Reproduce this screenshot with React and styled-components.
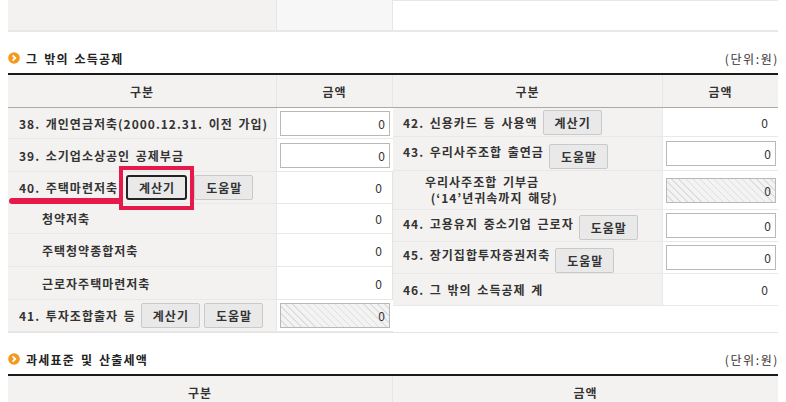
import React from "react";
import styled, { createGlobalStyle } from "styled-components";

const GlobalStyle = createGlobalStyle`
  body {
    margin: 0;
    background: #fff;
    font-family: "Noto Sans CJK KR", "Noto Sans", sans-serif;
    font-size: 12px;
    color: #333;
    word-spacing: 2px;
    letter-spacing: 1px;
  }
`;

const RED = "#e6194b";

const Page = styled.div`
  padding: 0 8px;
  width: 770px;
`;

const TopStrip = styled.div`
  display: grid;
  grid-template-columns: 269px 116px 1fr;
  height: 32px;
  border-bottom: 2px solid #e8e8e8;
  box-sizing: border-box;
`;

const TopCell = styled.div`
  background: ${(p) => p.$bg};
  border-right: 1px solid #e6e6e6;
  border-top: ${(p) => (p.$boxed ? "1px solid #e8e8e8" : "none")};
  &:last-child {
    border-right: none;
  }
`;

const SectionHead = styled.div`
  display: flex;
  justify-content: space-between;
  align-items: center;
  height: 16px;
  padding: 18px 0 7px;
`;

const Title = styled.h3`
  display: flex;
  align-items: center;
  gap: 6px;
  margin: 0;
  font-size: 12px;
  font-weight: 700;
  color: #222;
  letter-spacing: 1.2px;
`;

const Unit = styled.span`
  font-size: 12px;
  color: #333;
  letter-spacing: 1.6px;
  margin-right: -1px;
`;

const Table = styled.div`
  border-top: 2px solid #1a1a1a;
`;

const HeadRow = styled.div`
  display: grid;
  grid-template-columns: ${(p) => p.$cols};
  height: 33px;
  background: #f3f2f0;
  border-bottom: 1px solid #aaa;
  box-sizing: border-box;
`;

const HeadCell = styled.div`
  display: flex;
  align-items: center;
  justify-content: center;
  font-weight: 700;
  color: #333;
  border-right: 1px solid #e6e6e6;
  &:last-child {
    border-right: none;
  }
`;

const Body = styled.div`
  display: grid;
  grid-template-columns: 385px 385px;
  border-bottom: 1px solid #e4e4e4;
`;

const Half = styled.div`
  display: flex;
  flex-direction: column;
  border-right: ${(p) => (p.$first ? "1px solid #e4e4e4" : "none")};
`;

const Row = styled.div`
  display: grid;
  grid-template-columns: ${(p) => p.$label}px 1fr;
  height: ${(p) => p.$h}px;
  border-bottom: 1px solid #e8e8e8;
  box-sizing: border-box;
`;

const Filler = styled.div`
  flex: 1;
  background: #fff;
`;

const Label = styled.div`
  display: flex;
  align-items: center;
  padding-left: ${(p) => p.$indent}px;
  background: #f3f2f0;
  border-right: 1px solid #e8e8e8;
  font-weight: 700;
  color: #333;
  white-space: nowrap;
`;

const LabelText = styled.span`
  position: relative;
  top: ${(p) => p.$up || 0}px;
`;

const TwoLine = styled.div`
  display: flex;
  flex-direction: column;
  line-height: 16px;
`;

const Amount = styled.div`
  display: flex;
  align-items: center;
  justify-content: flex-end;
  padding: 0 3px;
  background: #fff;
`;

const Value = styled.span`
  padding-right: 7px;
  color: #333;
  letter-spacing: 0;
`;

const NumInput = styled.input`
  width: 110px;
  height: 25px;
  box-sizing: border-box;
  border: 1px solid #b8b8b8;
  padding: 0 4px;
  text-align: right;
  font-family: inherit;
  font-size: 12px;
  color: #333;
  background: ${(p) =>
    p.disabled
      ? "repeating-linear-gradient(45deg, #f3f3f3 0 4px, #dedede 4px 5px)"
      : "#fff"};
`;

const Btn = styled.button`
  height: 25px;
  margin-left: ${(p) => (p.$gap != null ? p.$gap : 5)}px;
  padding: 0 10px 0 11px;
  border: ${(p) => (p.$focus ? "2px solid #222" : "1px solid #c9c9c9")};
  border-radius: ${(p) => (p.$focus ? 3 : 2)}px;
  background: #e9e9e9;
  font-family: inherit;
  font-size: 12px;
  font-weight: 700;
  color: #333;
  letter-spacing: 1px;
  position: relative;
  top: ${(p) => p.$down || 0}px;
`;

const Focus = styled.span`
  position: relative;
  display: inline-flex;
  margin-left: 8px;
  margin-right: 2px;
`;

const RedBox = styled.span`
  position: absolute;
  top: -9px;
  left: -7px;
  right: -7px;
  bottom: -10px;
  border: 4px solid ${RED};
  pointer-events: none;
`;

const RedLine = styled.span`
  position: absolute;
  right: calc(100% + 4px);
  top: 23px;
  width: 113px;
  height: 6px;
  background: ${RED};
  border-radius: 3px 0 0 3px;
  pointer-events: none;
`;

const Bullet = () => (
  <svg width="12" height="12" viewBox="0 0 12 12">
    <circle cx="6" cy="6" r="5.8" fill="#f39a1e" />
    <polyline
      points="4.6,3.4 7.2,6 4.6,8.6"
      fill="none"
      stroke="#fff"
      strokeWidth="1.8"
    />
  </svg>
);

const leftRows = [
  { h: 31, label: "38. 개인연금저축(2000.12.31. 이전 가입)", input: true },
  { h: 33, label: "39. 소기업소상공인 공제부금", input: true },
  { h: 32, label: "40. 주택마련저축", focus: true },
  { h: 30, label: "청약저축", indent: 34 },
  { h: 33, label: "주택청약종합저축", indent: 34 },
  { h: 33, label: "근로자주택마련저축", indent: 34 },
  { h: 32, label: "41. 투자조합출자 등", calc: true, help: true, disabled: true },
];

const rightRows = [
  { h: 29, label: "42. 신용카드 등 사용액", calc: true },
  { h: 34, label: "43. 우리사주조합 출연금", help: true, input: true, up: -2, down: 3 },
  { h: 39, two: ["우리사주조합 기부금", "\u00a0(‘14’년귀속까지 해당)"], disabled: true },
  { h: 32, label: "44. 고용유지 중소기업 근로자", help: true, input: true, up: -2, down: 2 },
  { h: 32, label: "45. 장기집합투자증권저축", help: true, input: true, up: -3, down: 3, gap: 5 },
  { h: 32, label: "46. 그 밖의 소득공제 계" },
];

const renderRow = (r, i, labelW, pad) => (
  <Row key={i} $h={r.h} $label={labelW}>
    <Label $indent={r.indent || (r.two ? 32 : pad)}>
      {r.two ? (
        <TwoLine>
          <span>{r.two[0]}</span>
          <span>{r.two[1]}</span>
        </TwoLine>
      ) : (
        <LabelText $up={r.up}>{r.label}</LabelText>
      )}
      {r.focus && (
        <>
          <Focus>
            <RedLine />
            <Btn $focus $gap={0}>계산기</Btn>
            <RedBox />
          </Focus>
          <Btn $gap={5}>도움말</Btn>
        </>
      )}
      {r.calc && <Btn>계산기</Btn>}
      {r.help && (
        <Btn $gap={r.calc ? 4 : r.gap || 5} $down={r.down}>
          도움말
        </Btn>
      )}
    </Label>
    <Amount>
      {r.input || r.disabled ? (
        <NumInput defaultValue="0" disabled={!!r.disabled} />
      ) : (
        <Value>0</Value>
      )}
    </Amount>
  </Row>
);

const App = () => (
  <>
    <GlobalStyle />
    <Page>
      <TopStrip>
        <TopCell $bg="#f3f2f0" />
        <TopCell $bg="#f7f7f7" />
        <TopCell $bg="#fff" $boxed />
      </TopStrip>

      <SectionHead>
        <Title>
          <Bullet />그 밖의 소득공제
        </Title>
        <Unit>(단위:원)</Unit>
      </SectionHead>
      <Table>
        <HeadRow $cols="269px 116px 270px 1fr">
          <HeadCell>구분</HeadCell>
          <HeadCell>금액</HeadCell>
          <HeadCell>구분</HeadCell>
          <HeadCell>금액</HeadCell>
        </HeadRow>
        <Body>
          <Half $first>{leftRows.map((r, i) => renderRow(r, i, 269, 11))}</Half>
          <Half>
            {rightRows.map((r, i) => renderRow(r, i, 270, 10))}
            <Filler />
          </Half>
        </Body>
      </Table>

      <SectionHead>
        <Title>
          <Bullet />과세표준 및 산출세액
        </Title>
        <Unit>(단위:원)</Unit>
      </SectionHead>
      <Table>
        <HeadRow $cols="385px 1fr">
          <HeadCell>구분</HeadCell>
          <HeadCell>금액</HeadCell>
        </HeadRow>
      </Table>
    </Page>
  </>
);

export default App;
